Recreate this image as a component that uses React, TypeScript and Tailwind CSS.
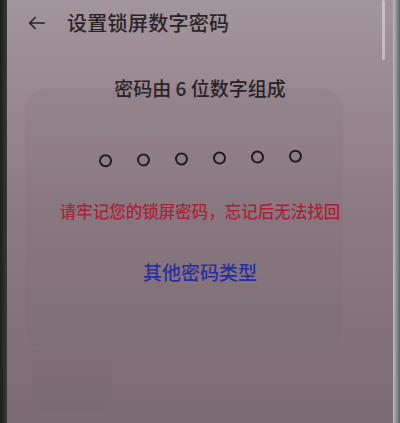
import React from 'react';

const dots = [0, 1, 2, 3, 4, 5];

export default function App() {
  return (
    <div className="w-[400px] h-[423px] overflow-hidden flex bg-[#1c2220]" style={{ fontFamily: '"Noto Sans CJK SC", "Noto Sans", sans-serif' }}>
      {/* left bezel */}
      <div className="w-[7px] shrink-0 bg-gradient-to-r from-[#1a201d] to-[#3a3a38]" />

      {/* screen */}
      <div className="relative flex-1 flex flex-col bg-gradient-to-b from-[#a3959c] via-[#8c7a82] to-[#7b6b72]">
        {/* glass reflections */}
        <div className="absolute left-[18px] top-[88px] w-[318px] h-[262px] rounded-[22px] bg-[#6f5f67]/10" />
        <div className="absolute left-[25px] top-[350px] w-[80px] h-[60px] rounded-b-[10px] bg-[#6f5f67]/10" />
        <div className="absolute right-[8px] top-0 w-[3px] h-[60px] bg-white/40 rounded-full" />

        {/* header */}
        <div className="relative flex items-center h-[46px] pl-[19px]">
          <svg width="22" height="22" viewBox="0 0 24 24" fill="none" stroke="#2a2326" strokeWidth="1.8" strokeLinecap="round" strokeLinejoin="round">
            <path d="M20 12H4" />
            <path d="M10 6l-6 6 6 6" />
          </svg>
          <span className="ml-[19px] text-[20px] font-medium text-[#2b2427] tracking-[0.3px]">设置锁屏数字密码</span>
        </div>

        {/* body */}
        <div className="relative flex flex-col items-center">
          <p className="mt-[32px] text-[19px] font-medium text-[#2a2326] leading-none">密码由 6 位数字组成</p>

          <div className="mt-[55px] flex gap-[25px] -rotate-[1.4deg]">
            {dots.map((d) => (
              <div key={d} className="w-[13px] h-[13px] rounded-full border-2 border-[#221c1f]" />
            ))}
          </div>

          <p className="mt-[38px] text-[16.5px] font-medium text-[#ad1f38] leading-none">请牢记您的锁屏密码，忘记后无法找回</p>

          <p className="mt-[42px] text-[19px] font-medium text-[#2a2f9e] leading-none">其他密码类型</p>
        </div>
      </div>

      {/* right bezel */}
      <div className="w-[7px] shrink-0 bg-gradient-to-r from-[#b9c0c0] to-[#5b6664]" />
    </div>
  );
}
